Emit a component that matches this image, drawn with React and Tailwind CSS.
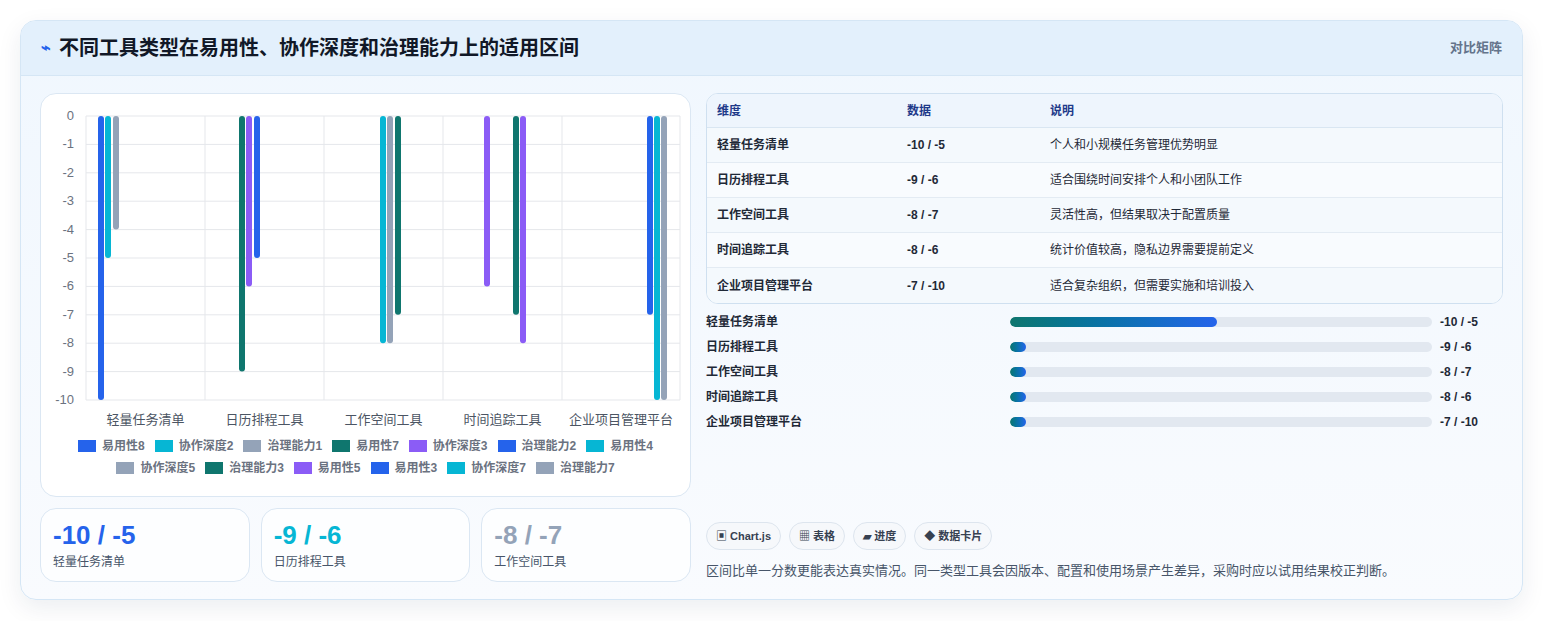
import React from "react";

const C = { b: "#2563eb", c: "#06b6d4", g: "#94a3b8", t: "#0f766e", p: "#8b5cf6" };
const bars = [
  [100, -10, C.b], [107, -5, C.c], [115, -4, C.g],
  [241, -9, C.t], [248, -6, C.p], [256, -5, C.b],
  [382, -8, C.c], [389, -8, C.g], [397, -7, C.t],
  [486, -6, C.p], [515, -7, C.t], [522, -8, C.p],
  [649, -7, C.b], [656, -10, C.c], [663, -10, C.g],
];
const cats = ["轻量任务清单", "日历排程工具", "工作空间工具", "时间追踪工具", "企业项目管理平台"];
const legend = [
  ["易用性8", C.b], ["协作深度2", C.c], ["治理能力1", C.g], ["易用性7", C.t], ["协作深度3", C.p], ["治理能力2", C.b], ["易用性4", C.c],
  ["协作深度5", C.g], ["治理能力3", C.t], ["易用性5", C.p], ["易用性3", C.b], ["协作深度7", C.c], ["治理能力7", C.g],
];
const rows = [
  ["轻量任务清单", "-10 / -5", "个人和小规模任务管理优势明显"],
  ["日历排程工具", "-9 / -6", "适合围绕时间安排个人和小团队工作"],
  ["工作空间工具", "-8 / -7", "灵活性高，但结果取决于配置质量"],
  ["时间追踪工具", "-8 / -6", "统计价值较高，隐私边界需要提前定义"],
  ["企业项目管理平台", "-7 / -10", "适合复杂组织，但需要实施和培训投入"],
];

function Chart() {
  const ox = 40, oy = 93;
  const y0 = 115 - oy, unit = 28.4;
  const xs = [85, 204, 323, 442, 561, 679].map((x) => x - ox);
  return (
    <svg width="651" height="340" className="block">
      {Array.from({ length: 11 }, (_, i) => (
        <g key={i}>
          <line x1={xs[0]} x2={xs[5]} y1={y0 + i * unit} y2={y0 + i * unit} stroke="#e5e7eb" />
          <text x={xs[0] - 12} y={y0 + i * unit + 4} textAnchor="end" fontSize="13" fill="#6b7280" fontFamily="Liberation Sans, sans-serif">{i === 0 ? "0" : -i}</text>
        </g>
      ))}
      {xs.map((x, i) => (
        <line key={i} x1={x} x2={x} y1={y0} y2={y0 + 10 * unit} stroke="#e5e7eb" />
      ))}
      {bars.map(([x, v, c], i) => (
        <line key={i} x1={x - ox} x2={x - ox} y1={y0 + 3} y2={y0 - v * unit - 3} stroke={c} strokeWidth="6" strokeLinecap="round" />
      ))}
      {cats.map((c, i) => (
        <text key={c} x={(xs[i] + xs[i + 1]) / 2} y={330} textAnchor="middle" fontSize="13" fill="#4b5563" fontFamily="Noto Sans CJK SC, sans-serif">{c}</text>
      ))}
    </svg>
  );
}

export default function App() {
  return (
    <div className="w-[1543px] h-[621px] bg-white pt-[20px] pl-[20px]" style={{ fontFamily: "'Liberation Sans', 'Noto Sans CJK SC', sans-serif" }}>
      <div className="w-[1503px] h-[580px] rounded-2xl border border-[#d5e6f5] bg-gradient-to-b from-[#f0f7fe] to-[#f9fbfe] shadow-[0_8px_24px_rgba(15,40,80,0.08)] overflow-hidden">
        <div className="h-[55px] bg-[#e3f0fc] border-b border-[#d5e6f5] flex items-center justify-between px-[20px]">
          <div className="flex items-center gap-[8px]">
            <span className="text-[#2563eb] text-[16px] font-bold">⌁</span>
            <span className="text-[20px] font-bold text-[#111827]">不同工具类型在易用性、协作深度和治理能力上的适用区间</span>
          </div>
          <span className="text-[13px] text-[#64748b] font-semibold">对比矩阵</span>
        </div>
        <div className="flex gap-[15px] px-[19px] pt-[17px]">
          <div className="w-[651px] flex flex-col gap-[11px]">
            <div className="h-[404px] rounded-2xl border border-[#dbe7f3] bg-white">
              <Chart />
              <div className="flex flex-wrap justify-center gap-x-[10px] gap-y-[4px] px-[30px] mt-[3px] text-[12px] text-[#6b7280] font-semibold">
                {legend.map(([l, c]) => (
                  <div key={l} className="flex items-center gap-[6px] h-[18px]">
                    <span className="w-[18px] h-[12px] inline-block" style={{ background: c }} />
                    {l}
                  </div>
                ))}
              </div>
            </div>
            <div className="grid grid-cols-3 gap-[11px]">
              {[["-10 / -5", "text-[#2563eb]", "轻量任务清单"], ["-9 / -6", "text-[#06b6d4]", "日历排程工具"], ["-8 / -7", "text-[#94a3b8]", "工作空间工具"]].map(([v, cls, l]) => (
                <div key={l} className="h-[74px] rounded-2xl border border-[#dbe7f3] bg-white/70 px-[12px] pt-[10px]">
                  <div className={`text-[26px] font-bold leading-[32px] ${cls}`}>{v}</div>
                  <div className="text-[12px] text-[#475569] mt-[2px]">{l}</div>
                </div>
              ))}
            </div>
          </div>
          <div className="flex-1 flex flex-col">
            <div className="rounded-xl border border-[#cfe0f0] overflow-hidden bg-white">
              <div className="flex h-[34px] items-center bg-[#eef5fd] border-b border-[#d9e6f2] text-[12px] font-bold text-[#1e3a8a]">
                <div className="w-[200px] pl-[10px]">维度</div>
                <div className="w-[143px]">数据</div>
                <div>说明</div>
              </div>
              {rows.map((r, i) => (
                <div key={i} className={`flex h-[35px] items-center text-[12px] text-[#1f2937] ${i < 4 ? "border-b border-[#e3ebf3]" : ""} ${i % 2 ? "bg-[#f8fbfe]" : "bg-[#f4f9fd]"}`}>
                  <div className="w-[200px] pl-[10px] font-semibold">{r[0]}</div>
                  <div className="w-[143px] font-semibold">{r[1]}</div>
                  <div>{r[2]}</div>
                </div>
              ))}
            </div>
            <div className="mt-[10px] flex flex-col gap-[9px]">
              {rows.map((r, i) => (
                <div key={i} className="flex items-center h-[16px] text-[12px] font-semibold text-[#1f2937]">
                  <div className="w-[304px]">{r[0]}</div>
                  <div className="w-[422px] h-[10px] rounded-full bg-[#e2e8f0] overflow-hidden">
                    <div className="h-full rounded-full bg-gradient-to-r from-[#0f766e] to-[#2563eb]" style={{ width: i === 0 ? "49%" : "16px" }} />
                  </div>
                  <div className="ml-[8px]">{r[1]}</div>
                </div>
              ))}
            </div>
            <div className="mt-[92px] flex gap-[8px]">
              {["▣ Chart.js", "▦ 表格", "▰ 进度", "◆ 数据卡片"].map((t) => (
                <span key={t} className="h-[28px] px-[9px] flex items-center rounded-full border border-[#dde5ee] bg-[#f6f8fb] text-[11px] font-semibold text-[#374151]">{t}</span>
              ))}
            </div>
            <p className="mt-[11px] text-[13px] text-[#475569]">区间比单一分数更能表达真实情况。同一类型工具会因版本、配置和使用场景产生差异，采购时应以试用结果校正判断。</p>
          </div>
        </div>
      </div>
    </div>
  );
}
